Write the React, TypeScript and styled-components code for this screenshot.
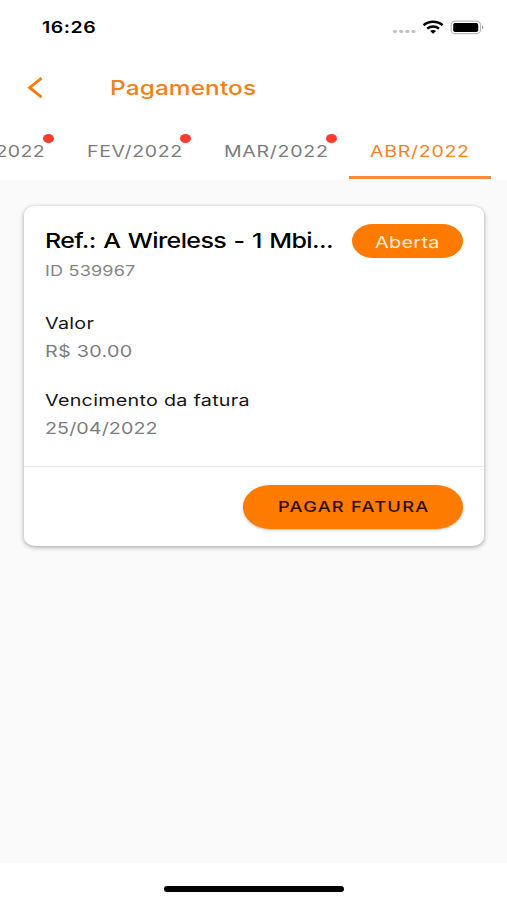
import React from "react";
import styled, { createGlobalStyle } from "styled-components";

const ORANGE = "#ff7b00";

const GlobalStyle = createGlobalStyle`
  * { box-sizing: border-box; }
  body {
    margin: 0;
    background: #fff;
    font-family: Inter, "Liberation Sans", sans-serif;
    overflow: hidden;
  }
`;

const Screen = styled.div`
  display: flex;
  flex-direction: column;
  width: 507px;
  height: 900px;
  overflow: hidden;
  background: #fff;
`;

/* Wide-set label: glyphs are stretched horizontally from the left edge. */
const Label = styled.span<{
  $size: number;
  $weight?: number;
  $color?: string;
  $track?: number;
  $words?: number;
  $line: number;
}>`
  display: block;
  width: max-content;
  font-size: ${(p) => p.$size}px;
  font-weight: ${(p) => p.$weight ?? 400};
  color: ${(p) => p.$color ?? "#151515"};
  letter-spacing: ${(p) => p.$track ?? 0}px;
  word-spacing: ${(p) => p.$words ?? 0}px;
  line-height: ${(p) => p.$line}px;
  white-space: pre;
  transform: scaleX(1.22);
  transform-origin: 0 50%;
`;

const StatusBar = styled.div`
  display: flex;
  align-items: center;
  justify-content: space-between;
  height: 55px;
  padding: 0 23px 0 41.5px;
`;

const StatusIcons = styled.div`
  display: flex;
  align-items: center;
`;

const Header = styled.header`
  display: flex;
  align-items: center;
  gap: 66px;
  height: 65px;
  padding-left: 27px;
`;

const BackButton = styled.button`
  display: flex;
  width: 17px;
  height: 22px;
  padding: 0;
  border: 0;
  background: none;
`;

const Tabs = styled.nav`
  display: flex;
  justify-content: flex-end;
  height: 60px;
  padding-right: 16.5px;
  overflow: hidden;
`;

const Tab = styled.button<{ $width: number; $active?: boolean }>`
  position: relative;
  flex: none;
  width: ${(p) => p.$width}px;
  height: 59px;
  padding: 5px 0 0 20.5px;
  border: 0;
  border-bottom: 3px solid ${(p) => (p.$active ? "#f58a3c" : "transparent")};
  background: none;
  font-family: inherit;
  text-align: left;
`;

const Dot = styled.i`
  position: absolute;
  top: 14px;
  right: 12px;
  width: 11px;
  height: 9px;
  border-radius: 50%;
  background: #ff3b30;
`;

const Content = styled.main`
  flex: none;
  height: 683px;
  padding: 26px 23px 0 24px;
  background: #fafafa;
`;

const Card = styled.article`
  height: 340px;
  border-radius: 11px / 9px;
  background: #fff;
  box-shadow: 0 1px 4px rgba(0, 0, 0, 0.3), 0 2px 6px rgba(0, 0, 0, 0.08);
`;

const CardBody = styled.div`
  height: 261px;
  padding: 17.5px 21px 0 21px;
  border-bottom: 1.5px solid #e6e8e8;
`;

const CardTop = styled.div`
  display: flex;
  justify-content: space-between;
  height: 34px;
`;

const Badge = styled.div`
  width: 111px;
  height: 34px;
  padding: 1.5px 0 0 23px;
  border-radius: 21px / 17px;
  background: ${ORANGE};
`;

const Field = styled.div<{ $gap: number }>`
  margin-top: ${(p) => p.$gap}px;
`;

const CardFooter = styled.div`
  display: flex;
  justify-content: flex-end;
  padding: 17.5px 21px 0 0;
`;

const PayButton = styled.button`
  width: 220px;
  height: 44.5px;
  padding: 0 0 0 34.5px;
  border: 0;
  border-radius: 27px / 22px;
  background: ${ORANGE};
  box-shadow: 0 1px 3px rgba(0, 0, 0, 0.25);
  font-family: inherit;
  text-align: left;
`;

const BottomArea = styled.footer`
  display: flex;
  justify-content: center;
  height: 37px;
  padding: 23px 0 0 1.5px;
`;

const HomeBar = styled.div`
  width: 180px;
  height: 5.5px;
  border-radius: 3px;
  background: #000;
`;

const months = [
  { name: "JAN/2022", width: 139, track: 0.3, due: true },
  { name: "FEV/2022", width: 137, track: 0.5, due: true },
  { name: "MAR/2022", width: 146, track: 0.6, due: true },
  { name: "ABR/2022", width: 141.5, track: 0.6, due: false },
];

const fields = [
  { name: "Valor", value: "R$ 30.00", gap: 25, track: 0.24 },
  { name: "Vencimento da fatura", value: "25/04/2022", gap: 21, track: 0.05 },
];

export default function App() {
  return (
    <>
      <GlobalStyle />
      <Screen>
        <StatusBar>
          <Label $size={16} $weight={600} $track={0.45} $line={21} $color="#000">
            16:26
          </Label>
          <StatusIcons>
            <svg width="92" height="16" viewBox="0 0 92 16">
              <g fill="#c4c4c4">
                <ellipse cx="3" cy="11.5" rx="2.1" ry="1.8" />
                <ellipse cx="9.2" cy="11.5" rx="2.1" ry="1.8" />
                <ellipse cx="15.3" cy="11.5" rx="2.1" ry="1.8" />
                <ellipse cx="21.5" cy="11.5" rx="2.1" ry="1.8" />
              </g>
              <g fill="none" stroke="#000" strokeWidth="2.5">
                <path d="M31.6 5.2C37 .6 45.2 .6 50.6 5.2" />
                <path d="M35.2 8.6C38.6 5.7 43.6 5.7 47 8.6" />
              </g>
              <path d="M38.1 11.1C39.8 9.6 42.4 9.6 44.1 11.1L41.1 13.7Z" fill="#000" />
              <rect x="59.2" y="1.1" width="29.3" height="12.6" rx="4.3" ry="3.8" fill="none" stroke="#b8b8b8" strokeWidth="1.2" />
              <rect x="61.2" y="3" width="25" height="9" rx="1.8" fill="#000" />
              <path d="M90 5.5C91.7 6.2 91.7 8.6 90 9.3Z" fill="#999" />
            </svg>
          </StatusIcons>
        </StatusBar>
        <Header>
          <BackButton aria-label="Voltar">
            <svg width="17" height="22" viewBox="0 0 17 22" fill="none" stroke="#f57a0f" strokeWidth="2.8">
              <path d="M14.6 1.2L2.6 10.7L14.6 20.2" />
            </svg>
          </BackButton>
          <Label $size={20} $weight={500} $track={0.1} $line={26} $color="#f57f17">
            Pagamentos
          </Label>
        </Header>
        <Tabs>
          {months.map((m) => (
            <Tab key={m.name} $width={m.width} $active={!m.due}>
              <Label $size={16} $track={m.track} $line={24} $color={m.due ? "#7c7c7c" : "#f5831f"}>
                {m.name}
              </Label>
              {m.due && <Dot />}
            </Tab>
          ))}
        </Tabs>
        <Content>
          <Card>
            <CardBody>
              <CardTop>
                <Label $size={20.5} $weight={500} $track={-0.49} $words={1.1} $line={34} $color="#000">
                  Ref.: A Wireless - 1 Mbi...
                </Label>
                <Badge>
                  <Label $size={16.3} $track={0.25} $line={34} $color="#ffeedd">
                    Aberta
                  </Label>
                </Badge>
              </CardTop>
              <Label $size={14.8} $track={0.15} $line={26} $color="#858585">
                ID 539967
              </Label>
              {fields.map((f) => (
                <Field key={f.name} $gap={f.gap}>
                  <Label $size={16.2} $track={0.22} $line={28}>
                    {f.name}
                  </Label>
                  <Label $size={16.2} $track={f.track} $line={28} $color="#7d7d7d">
                    {f.value}
                  </Label>
                </Field>
              ))}
            </CardBody>
            <CardFooter>
              <PayButton>
                <Label $size={15} $weight={500} $track={1.03} $line={44} $color="#2e1000">
                  PAGAR FATURA
                </Label>
              </PayButton>
            </CardFooter>
          </Card>
        </Content>
        <BottomArea>
          <HomeBar />
        </BottomArea>
      </Screen>
    </>
  );
}
